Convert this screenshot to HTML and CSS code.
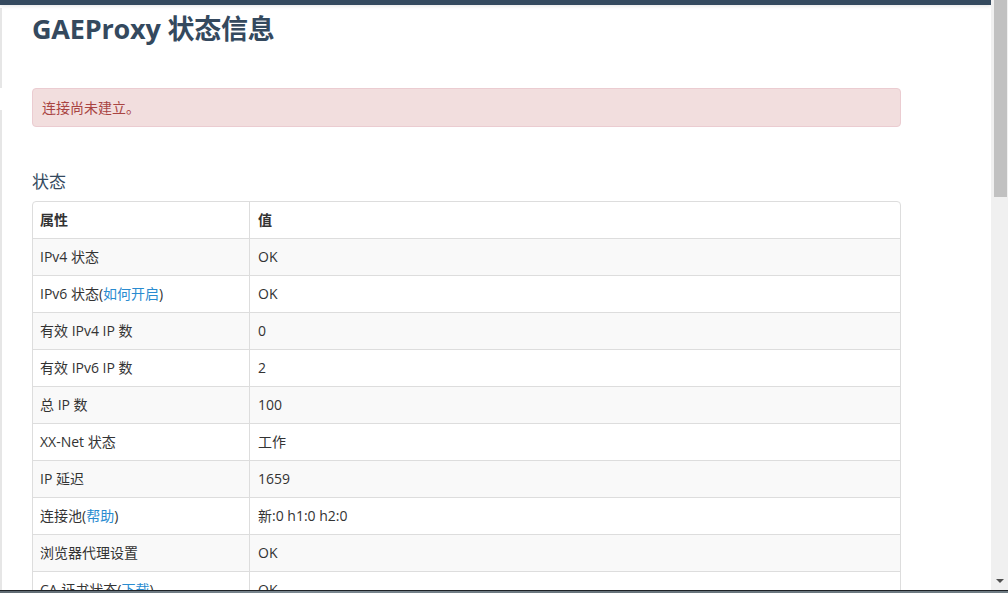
FILE: index.html
```html
<!DOCTYPE html>
<html lang="zh-CN">
<head>
<meta charset="utf-8">
<title>GAEProxy 状态信息</title>
<link rel="stylesheet" href="styles.css">
</head>
<body>
<div class="window">
  <div class="viewport">
    <div class="page">
      <div class="topbar"></div>
      <div class="body-row">
        <div class="edge">
          <div class="edge-seg edge-a"></div>
          <div class="edge-seg edge-b"></div>
        </div>
        <main class="content">
          <h1 class="title">GAEProxy 状态信息</h1>
          <div class="alert">连接尚未建立。</div>
          <h3 class="section">状态</h3>
          <table class="status">
            <thead>
              <tr><th class="c1">属性</th><th>值</th></tr>
            </thead>
            <tbody>
              <tr><td>IPv4 状态</td><td>OK</td></tr>
              <tr><td>IPv6 状态(<a href="#">如何开启</a>)</td><td>OK</td></tr>
              <tr><td>有效 IPv4 IP 数</td><td>0</td></tr>
              <tr><td>有效 IPv6 IP 数</td><td>2</td></tr>
              <tr><td>总 IP 数</td><td>100</td></tr>
              <tr><td>XX-Net 状态</td><td>工作</td></tr>
              <tr><td>IP 延迟</td><td>1659</td></tr>
              <tr><td>连接池(<a href="#">帮助</a>)</td><td>新:0 h1:0 h2:0</td></tr>
              <tr><td>浏览器代理设置</td><td>OK</td></tr>
              <tr><td>CA 证书状态(<a href="#">下载</a>)</td><td>OK</td></tr>
              <tr><td>App ID</td><td>OK</td></tr>
            </tbody>
          </table>
        </main>
      </div>
    </div>
    <div class="scrollbar">
      <div class="thumb"></div>
      <div class="track"></div>
      <div class="arrow"></div>
    </div>
  </div>
  <div class="taskbar"></div>
</div>
</body>
</html>
```

FILE: styles.css
```css
html, body {
  margin: 0;
  padding: 0;
  height: 593px;
  overflow: hidden;
  background: #fff;
}

body {
  font-family: "Open Sans", "Noto Sans CJK SC", sans-serif;
  color: #333;
}

.window {
  display: flex;
  flex-direction: column;
  height: 593px;
}

.viewport {
  flex: 1;
  display: flex;
  min-height: 0;
}

.page {
  width: 991px;
  display: flex;
  flex-direction: column;
  overflow: hidden;
}

.topbar {
  height: 5px;
  background: #34495e;
  box-shadow: 0 1px 4px rgba(0, 0, 0, 0.12);
  flex: none;
  position: relative;
  z-index: 1;
}

.body-row {
  flex: 1;
  display: flex;
  min-height: 0;
}

.edge {
  width: 2px;
  flex: none;
  display: flex;
  flex-direction: column;
}

.edge-seg {
  background: #e6e6e6;
}

.edge-a {
  margin-top: 3px;
  height: 80px;
}

.edge-b {
  margin-top: 22px;
  flex: 1;
}

.content {
  width: 869px;
  padding-left: 30px;
  flex: none;
}

.title {
  margin: 6px 0 41px;
  font-size: 27px;
  line-height: 36px;
  font-weight: 700;
  color: #34495e;
  letter-spacing: -0.2px;
}

.alert {
  background: #f2dede;
  border: 1px solid #ebccd1;
  border-radius: 4px;
  color: #a94442;
  font-size: 14px;
  line-height: 19px;
  padding: 9px 9px;
  margin: 0;
}

.section {
  margin: 43px 0 7px;
  font-size: 17px;
  line-height: 24px;
  font-weight: 400;
  color: #34495e;
}

.status {
  width: 869px;
  border-collapse: separate;
  border-spacing: 0;
  border: 1px solid #ddd;
  border-radius: 4px;
  font-size: 14px;
  line-height: 20px;
}

.status th,
.status td {
  text-align: left;
  padding: 8px 8px 8px 7px;
  border-top: 1px solid #ddd;
  vertical-align: middle;
}

.status thead th {
  border-top: 0;
  font-weight: 700;
  padding-bottom: 8px;
  height: 20px;
}

.status th:first-child,
.status td:first-child {
  width: 201px;
  border-right: 1px solid #ddd;
}

.status td:last-child,
.status th:last-child {
  padding-left: 8px;
}

.status tbody tr:nth-child(odd) td {
  background: #f9f9f9;
}

.status a {
  color: #2a8bd0;
  text-decoration: none;
}

.scrollbar {
  width: 17px;
  flex: none;
  background: #f0f0f0;
  display: flex;
  flex-direction: column;
  align-items: center;
}

.thumb {
  width: 13px;
  height: 197px;
  background: #c1c1c1;
  margin-left: 1px;
}

.track {
  flex: 1;
}

.arrow {
  width: 0;
  height: 0;
  border-left: 4px solid transparent;
  border-right: 4px solid transparent;
  border-top: 4px solid #505050;
  margin-bottom: 7px;
}

.taskbar {
  height: 3px;
  flex: none;
  border-top: 1px solid #1e2226;
  background: linear-gradient(90deg, #5f6a72, #7b8891 30%, #66727a 60%, #6f7c84);
  box-sizing: border-box;
}
```
